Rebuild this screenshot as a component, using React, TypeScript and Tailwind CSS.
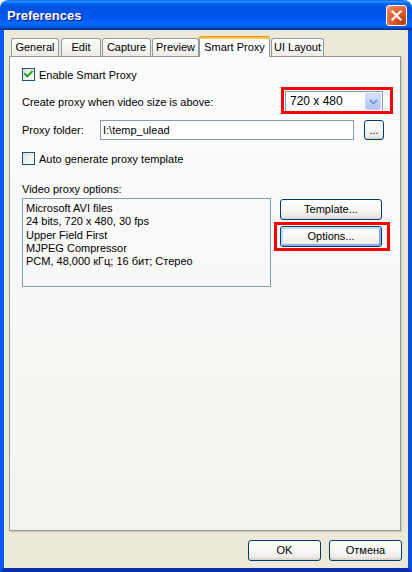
import React from 'react';

function Checkbox({ checked }: { checked?: boolean }) {
  return (
    <div className="w-[13px] h-[13px] shrink-0 border border-[#1C5180] bg-[linear-gradient(135deg,#DCDCD7_0%,#F0F0EC_50%,#FFFFFF_100%)] flex items-center justify-center">
      {checked && (
        <svg width="11" height="11" viewBox="0 0 11 11">
          <path d="M2 5 L4.3 7.4 L9 2.6" fill="none" stroke="#21A121" strokeWidth="2" strokeLinecap="square" />
        </svg>
      )}
    </div>
  );
}

function XpButton({ children, className, focused }: { children: React.ReactNode; className: string; focused?: boolean }) {
  return (
    <div
      className={
        className +
        ' rounded-[3px] border border-[#003C74] bg-[linear-gradient(to_bottom,#FFFFFF_0%,#F7F7F4_50%,#ECEBE6_85%,#D6D0C5_100%)] flex items-center justify-center text-[11px] leading-[13px] text-black ' +
        (focused
          ? 'shadow-[inset_1px_1px_0_0_#CEE7FF,inset_-1px_-1px_0_0_#89ADE4,inset_2px_2px_0_0_#BCD4F6,inset_-2px_-2px_0_0_#89ADE4]'
          : '')
      }
    >
      {children}
    </div>
  );
}

function Tab({ label, className, selected }: { label: string; className: string; selected?: boolean }) {
  if (selected) {
    return (
      <div className={className + ' relative z-10 h-[21px] -mb-px bg-[#FCFCFE] border-x border-[#919B9C] rounded-t-[3px] flex flex-col'}>
        <div className="h-[3px] -mx-px rounded-t-[3px] bg-[#FFC83C] border-t border-[#E68B2C]" />
        <div className="flex-1 flex items-center justify-center pb-[2px]">{label}</div>
      </div>
    );
  }
  return (
    <div className={className + ' h-[18px] border-t border-x border-[#919B9C] rounded-t-[3px] bg-[linear-gradient(to_bottom,#FFFFFF,#F3F3EF_60%,#ECEBE6)] flex items-center justify-center'}>
      {label}
    </div>
  );
}

export default function App() {
  return (
    <div className="w-[412px] h-[572px] flex flex-col bg-white font-['Liberation_Sans',Arial,sans-serif] text-[11px] leading-[13px] text-black overflow-hidden">
      {/* Title bar */}
      <div className="h-[30px] shrink-0 flex items-center pl-[7px] pr-[5px] rounded-t-[8px] bg-[linear-gradient(to_bottom,#0058EE_0%,#3593FF_4%,#288EFF_6%,#127DFF_8%,#036FFC_10%,#0262EE_14%,#0057E5_20%,#0054E3_24%,#0055EB_56%,#005BF5_66%,#026AFE_76%,#0062EF_86%,#0052D6_92%,#0040AB_94%,#003092_100%)]">
        <span className="text-white font-bold text-[13px] leading-[16px] pt-[2px] [text-shadow:1px_1px_#0F1089]">Preferences</span>
        <div className="ml-auto w-[21px] h-[21px] rounded-[3px] border border-white bg-[radial-gradient(circle_at_85%_85%,#C13C0C_0%,#DA5A2A_45%,#E4764E_75%,#F0A88A_100%)] flex items-center justify-center">
          <svg width="13" height="13" viewBox="0 0 13 13">
            <path d="M2.5 2.5 L10.5 10.5 M10.5 2.5 L2.5 10.5" stroke="#FFFFFF" strokeWidth="2.2" strokeLinecap="square" />
          </svg>
        </div>
      </div>

      {/* Client */}
      <div className="flex-1 flex flex-col bg-[#ECE9D8] border-l-4 border-r-4 border-b-4 border-l-[#0B5AF2] border-r-[#0A4FE0] border-b-[#0A2FA8]">
        {/* Tabs */}
        <div className="flex items-end h-[20px] mt-[6px] pl-[7px]">
          <Tab label="General" className="w-[48px]" />
          <Tab label="Edit" className="w-[40px] ml-[2px]" />
          <Tab label="Capture" className="w-[49px] ml-[1px]" />
          <Tab label="Preview" className="w-[47px] ml-[1px]" />
          <Tab label="Smart Proxy" className="w-[71px]" selected />
          <Tab label="UI Layout" className="w-[53px] ml-[1px]" />
        </div>

        {/* Panel */}
        <div className="relative ml-[5px] w-[392px] h-[475px] shrink-0 border border-[#919B9C] bg-[linear-gradient(to_bottom,#FCFCFE,#F4F3EE)] shadow-[1px_1px_0_#D0CEBF,2px_2px_0_#E3E0D0] pl-[12px] pt-[11px] flex flex-col">
          <div className="flex items-center h-[13px] gap-[4px]">
            <Checkbox checked />
            <span className="pt-px">Enable Smart Proxy</span>
          </div>

          <div className="flex items-center h-[21px] mt-[10px]">
            <span className="pt-px">Create proxy when video size is above:</span>
            <div className="relative ml-auto mr-[17px] w-[98px] h-[21px]">
              <div className="w-full h-full border border-[#7F9DB9] bg-white flex items-center">
                <span className="flex-1 pl-[4px] text-[12px]">720 x 480</span>
                <div className="w-[16px] h-[17px] mr-px rounded-[2px] border border-[#C3D3FD] bg-[linear-gradient(to_bottom,#D6E2FD,#BCCEF8_60%,#B1C6F6)] flex items-center justify-center">
                  <svg width="9" height="6" viewBox="0 0 9 6">
                    <path d="M1 1 L4.5 4.5 L8 1" fill="none" stroke="#7F93C4" strokeWidth="1.8" />
                  </svg>
                </div>
              </div>
              <div className="absolute -left-[4px] -top-[4px] -right-[10px] -bottom-[2px] border-[3px] border-[#FF0000]" />
            </div>
          </div>

          <div className="flex items-center h-[20px] mt-[8px]">
            <span className="w-[78px] pt-px">Proxy folder:</span>
            <div className="w-[254px] h-[20px] border border-[#7F9DB9] bg-white flex items-center pl-[2px] pt-px">{'I:\\temp_ulead'}</div>
            <XpButton className="w-[20px] h-[20px] ml-[10px]">...</XpButton>
          </div>

          <div className="flex items-center h-[13px] gap-[4px] mt-[12px]">
            <Checkbox />
            <span className="pt-px">Auto generate proxy template</span>
          </div>

          <div className="h-[13px] mt-[17px] pt-px">Video proxy options:</div>

          <div className="flex items-start mt-[3px]">
            <div className="w-[249px] h-[89px] border border-[#7F9DB9] pl-[3px] pt-[3px] leading-[13.3px]">
              <div>Microsoft AVI files</div>
              <div>24 bits, 720 x 480, 30 fps</div>
              <div>Upper Field First</div>
              <div>MJPEG Compressor</div>
              <div>PCM, 48,000 кГц; 16 бит; Стерео</div>
            </div>
            <div className="flex flex-col ml-[9px] mt-px gap-[6px]">
              <XpButton className="w-[102px] h-[21px]">Template...</XpButton>
              <div className="relative">
                <XpButton className="w-[102px] h-[21px]" focused>Options...</XpButton>
                <div className="absolute -left-[6px] -top-[4px] -right-[8px] -bottom-[4px] border-[3px] border-[#FF0000]" />
              </div>
            </div>
          </div>
        </div>

        {/* Bottom buttons */}
        <div className="flex justify-end gap-[8px] mt-[9px] pr-[6px]">
          <XpButton className="w-[73px] h-[21px]">OK</XpButton>
          <XpButton className="w-[73px] h-[21px]">Отмена</XpButton>
        </div>
      </div>
    </div>
  );
}
